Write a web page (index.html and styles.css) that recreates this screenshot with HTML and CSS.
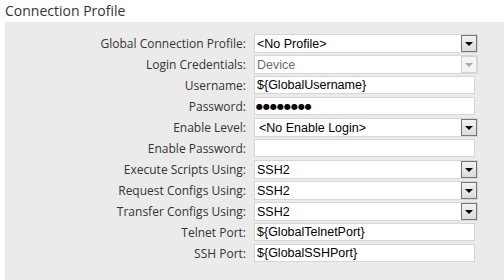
FILE: index.html
```html
<!DOCTYPE html>
<html>
<head>
<meta charset="utf-8">
<link rel="stylesheet" href="styles.css">
</head>
<body>
<h2 class="title">Connection Profile</h2>
<div class="panel">
  <div class="form">
    <label class="lbl">Global Connection Profile:</label>
    <div class="select"><span class="val">&lt;No Profile&gt;</span><span class="btn"><span class="tri"></span></span></div>

    <label class="lbl">Login Credentials:</label>
    <div class="select disabled"><span class="val">Device</span><span class="btn"><span class="tri"></span></span></div>

    <label class="lbl">Username:</label>
    <div class="text"><span class="val">${GlobalUsername}</span></div>

    <label class="lbl">Password:</label>
    <div class="text"><span class="val dots">●●●●●●●●</span></div>

    <label class="lbl">Enable Level:</label>
    <div class="select"><span class="val indent">&lt;No Enable Login&gt;</span><span class="btn"><span class="tri"></span></span></div>

    <label class="lbl">Enable Password:</label>
    <div class="text"><span class="val"></span></div>

    <label class="lbl">Execute Scripts Using:</label>
    <div class="select"><span class="val">SSH2</span><span class="btn"><span class="tri"></span></span></div>

    <label class="lbl">Request Configs Using:</label>
    <div class="select"><span class="val">SSH2</span><span class="btn"><span class="tri"></span></span></div>

    <label class="lbl">Transfer Configs Using:</label>
    <div class="select"><span class="val">SSH2</span><span class="btn"><span class="tri"></span></span></div>

    <label class="lbl">Telnet Port:</label>
    <div class="text"><span class="val">${GlobalTelnetPort}</span></div>

    <label class="lbl">SSH Port:</label>
    <div class="text"><span class="val">${GlobalSSHPort}</span></div>
  </div>
</div>
</body>
</html>
```
FILE: styles.css
```css
html, body {
  margin: 0;
  padding: 0;
  background: #ffffff;
  font-family: "Open Sans", "DejaVu Sans", sans-serif;
}
.title {
  margin: 0;
  padding: 2px 0 0 5px;
  height: 20px;
  font-size: 14px;
  font-weight: 400;
  line-height: 18px;
  color: #333333;
}
.panel {
  margin-left: 5px;
  background: #ebebec;
  height: 258px;
  padding-top: 12px;
  box-sizing: border-box;
}
.form {
  display: grid;
  grid-template-columns: 241px 224px;
  grid-auto-rows: 21px;
  column-gap: 8px;
  align-items: start;
}
.lbl {
  text-align: right;
  font-size: 12px;
  line-height: 19px;
  color: #333333;
  white-space: nowrap;
}
.select, .text {
  box-sizing: border-box;
  height: 19px;
  background: #ffffff;
  border: 1px solid #d6d6d6;
  display: flex;
  align-items: center;
  font-family: "Liberation Sans", Arial, sans-serif;
  font-size: 12.5px;
  color: #000000;
}
.text {
  width: 221px;
  height: 18px;
}
.val {
  flex: 1;
  padding-left: 2px;
  line-height: 16px;
  white-space: nowrap;
}
.val.indent { padding-left: 4px; }
.dots {
  font-family: "Open Sans", "DejaVu Sans", sans-serif;
  font-size: 8px;
  padding-left: 1px;
}
.btn {
  box-sizing: border-box;
  width: 16px;
  height: 17px;
  border: 1px solid #767676;
  background: linear-gradient(#f2f2f2, #dcdcdc);
  display: flex;
  align-items: center;
  justify-content: center;
}
.tri {
  width: 0;
  height: 0;
  border-left: 4px solid transparent;
  border-right: 4px solid transparent;
  border-top: 4px solid #000000;
  margin-top: 1px;
}
.disabled .val { color: #6d6d6d; }
.disabled .btn {
  border-color: #d6d6d6;
  background: #f4f4f4;
}
.disabled .tri { border-top-color: #a8a8a8; }
```
